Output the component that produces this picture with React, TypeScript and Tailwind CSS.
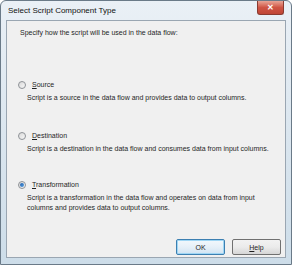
import React from 'react';

const font = { fontFamily: '"Liberation Sans", Arial, sans-serif' };

function Radio({ checked }: { checked?: boolean }) {
  return (
    <span className="flex h-[8px] w-[8px] items-center justify-center rounded-full border border-[#8e9297] bg-gradient-to-br from-[#d8d8d8] to-[#f8f8f8]">
      {checked && (
        <span className="h-[4px] w-[4px] rounded-full bg-gradient-to-br from-[#1d5fae] to-[#5aa0e0]" />
      )}
    </span>
  );
}

function Option({
  accel,
  rest,
  lines,
  checked,
}: {
  accel: string;
  rest: string;
  lines: string[];
  checked?: boolean;
}) {
  return (
    <div className="flex flex-col">
      <div className="flex h-[10px] items-center">
        <span className="ml-[11px] mr-[6px]">
          <Radio checked={checked} />
        </span>
        <span>
          <span className="underline underline-offset-1">{accel}</span>
          {rest}
        </span>
      </div>
      <div className="mt-[3px] ml-[20px] flex flex-col">
        {lines.map((l) => (
          <span key={l} className="h-[10px] leading-[10px]">
            {l}
          </span>
        ))}
      </div>
    </div>
  );
}

export default function App() {
  return (
    <div
      className="relative flex h-[265px] w-[292px] flex-col overflow-hidden rounded-t-[6px] border border-[#6a7a88] bg-gradient-to-b from-[#eaf0f6] via-[#dbe6ef] to-[#cddde9] text-[7px] leading-[10px] text-[#1f1f1f]"
      style={font}
    >
      {/* title bar */}
      <div className="flex h-[19px] shrink-0 items-center pl-[7px] text-[8px] text-[#111]">
        Select Script Component Type
      </div>
      <div className="absolute right-[7px] top-0 flex h-[14px] w-[27px] items-center justify-center rounded-b-[3px] border border-t-0 border-[#8a3a30] bg-gradient-to-b from-[#e8a496] via-[#cf5444] to-[#c04636] text-[8px] font-bold leading-none text-white">
        ✕
      </div>

      {/* client area */}
      <div className="mx-[5px] mb-[6px] flex flex-1 flex-col border border-[#9aa6b2] bg-[#f0f0f0]">
        <div className="ml-[13px] mt-[7px] h-[10px]">Specify how the script will be used in the data flow:</div>

        <div className="mt-[42px] flex flex-col">
          <Option
            accel="S"
            rest="ource"
            lines={['Script is a source in the data flow and provides data to output columns.']}
          />
          <div className="h-[28px]" />
          <Option
            accel="D"
            rest="estination"
            lines={['Script is a destination in the data flow and consumes data from input columns.']}
          />
          <div className="h-[26px]" />
          <Option
            accel="T"
            rest="ransformation"
            checked
            lines={[
              'Script is a transformation in the data flow and operates on data from input',
              'columns and provides data to output columns.',
            ]}
          />
        </div>

        <div className="mt-auto mb-[2px] mr-[4px] flex justify-end gap-[7px]">
          <button className="h-[16px] w-[49px] rounded-[2px] border border-[#3c7fb1] bg-gradient-to-b from-[#f2f8fc] via-[#e6f0f8] to-[#d0e3f2] text-[7px] leading-none text-[#1f1f1f] shadow-[inset_0_0_0_1px_#9fd6f4]">
            OK
          </button>
          <button className="h-[16px] w-[49px] rounded-[2px] border border-[#707070] bg-gradient-to-b from-[#f2f2f2] via-[#ebebeb] to-[#d6d6d6] text-[7px] leading-none text-[#1f1f1f]">
            <span className="underline underline-offset-1">H</span>elp
          </button>
        </div>
      </div>
    </div>
  );
}
